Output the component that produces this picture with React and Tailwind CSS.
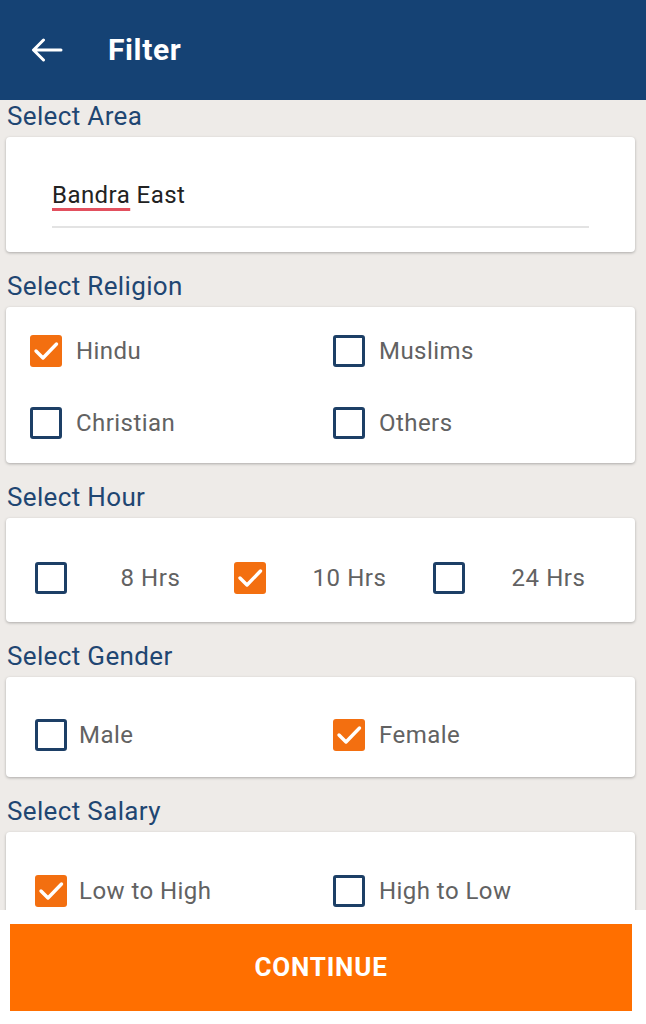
const Check = ({ checked }) =>
  checked ? (
    <div className="w-8 h-8 shrink-0 rounded-[3px] bg-[#f36f10]">
      <svg width="32" height="32" viewBox="0 0 32 32" fill="none">
        <path d="M6 16l7 7L26.5 9" stroke="#fff" strokeWidth="3.4" strokeLinecap="round" strokeLinejoin="round" />
      </svg>
    </div>
  ) : (
    <div className="w-8 h-8 shrink-0 rounded-[3px] border-[3px] border-[#1d3f66] bg-white" />
  );

const Option = ({ label, checked, gap = 'gap-[14px]' }) => (
  <div className={`flex items-center ${gap}`}>
    <Check checked={checked} />
    <span className="text-[24px] tracking-[0.45px] text-[#626262] leading-8">{label}</span>
  </div>
);

const Label = ({ children, first }) => (
  <h2
    className={`px-[7px] text-[26px] tracking-[0.35px] leading-8 text-[#1f4672] mb-[5px] ${first ? 'mt-0' : 'mt-[18px]'}`}
  >
    {children}
  </h2>
);

const Card = ({ className = '', children }) => (
  <div className={`mx-[6px] w-[629px] bg-white rounded-[4px] shadow-[0_1px_3px_rgba(0,0,0,0.28)] ${className}`}>
    {children}
  </div>
);

export default function App() {
  return (
    <div
      className="h-[1024px] w-[646px] flex flex-col overflow-hidden bg-[#eeebe8]"
      style={{ fontFamily: 'Roboto, "Noto Sans", sans-serif' }}
    >
      {/* Toolbar */}
      <header className="h-[100px] shrink-0 bg-[#154274] flex items-center">
        <div className="w-[108px] pl-[31px]">
          <svg width="32" height="24" viewBox="0 0 32 24" fill="none">
            <path d="M30 12H3M12.5 2L2.5 12l10 10" stroke="#fff" strokeWidth="3" strokeLinecap="round" strokeLinejoin="round" />
          </svg>
        </div>
        <h1 className="text-[30px] tracking-[0.6px] font-bold text-white leading-none">Filter</h1>
      </header>

      {/* Filters */}
      <main className="flex-1 overflow-hidden">
        <Label first>Select Area</Label>
        <Card className="pt-[42px] pb-[24px] px-[46px]">
          <div className="text-[24px] tracking-[0.45px] leading-8 text-[#222]">
            <span className="underline decoration-[#e2505e] decoration-[3px] underline-offset-[5px]">Bandra</span> East
          </div>
          <div className="mt-[15px] h-[2px] bg-[#e3e3e3]" />
        </Card>

        <Label>Select Religion</Label>
        <Card className="pt-[28px] pb-[24px] pl-[24px]">
          <div className="grid grid-cols-[303px_1fr] gap-y-[40px]">
            <Option label="Hindu" checked />
            <Option label="Muslims" />
            <Option label="Christian" />
            <Option label="Others" />
          </div>
        </Card>

        <Label>Select Hour</Label>
        <Card className="pt-[44px] pb-[28px] pl-[29px]">
          <div className="grid grid-cols-[199px_199px_199px]">
            {[
              ['8 Hrs', false],
              ['10 Hrs', true],
              ['24 Hrs', false],
            ].map(([label, checked]) => (
              <div key={label} className="flex items-center">
                <Check checked={checked} />
                <span className="flex-1 text-center text-[24px] tracking-[0.6px] leading-8 text-[#626262]">{label}</span>
              </div>
            ))}
          </div>
        </Card>

        <Label>Select Gender</Label>
        <Card className="pt-[42px] pb-[26px] pl-[29px]">
          <div className="grid grid-cols-[298px_1fr]">
            <Option label="Male" gap="gap-[12px]" />
            <Option label="Female" checked />
          </div>
        </Card>

        <Label>Select Salary</Label>
        <Card className="pt-[43px] pb-[26px] pl-[29px]">
          <div className="grid grid-cols-[298px_1fr]">
            <Option label="Low to High" checked gap="gap-[12px]" />
            <Option label="High to Low" />
          </div>
        </Card>
      </main>

      {/* Footer */}
      <footer className="shrink-0 bg-white pt-[14px] pb-[13px] pl-[10px] pr-[14px]">
        <button className="w-full h-[87px] bg-[#ff6f00] text-white text-[26px] tracking-[0.8px] font-bold">
          CONTINUE
        </button>
      </footer>
    </div>
  );
}
